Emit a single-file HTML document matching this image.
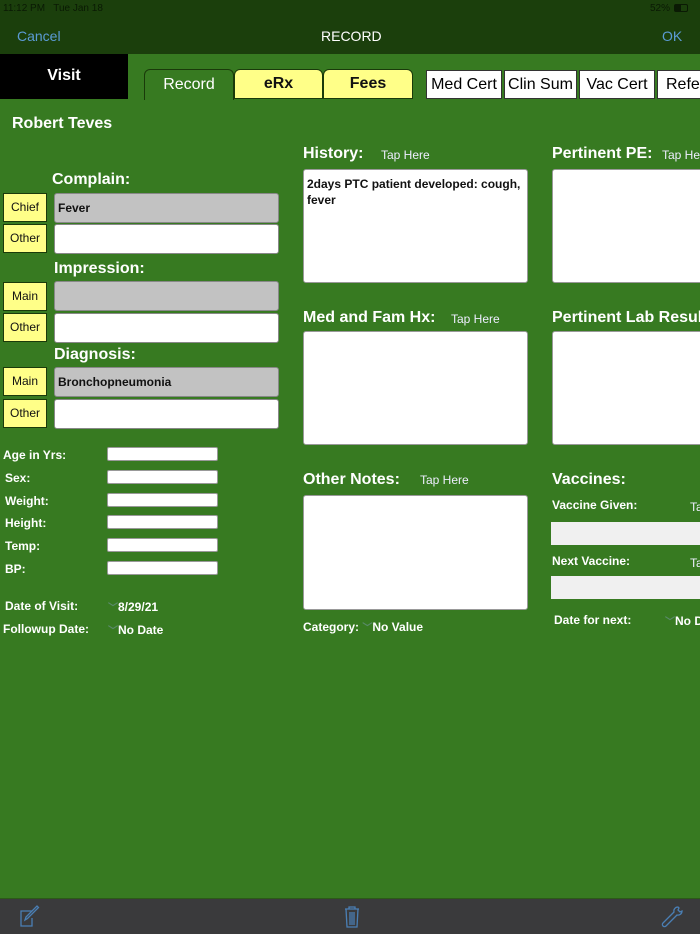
<!DOCTYPE html>
<html><head><meta charset="utf-8"><style>
*{margin:0;padding:0;box-sizing:border-box}
body{width:700px;height:934px;overflow:hidden;background:#377a21;font-family:"Liberation Sans",sans-serif;position:relative;color:#fff}
.a{position:absolute;white-space:nowrap}
.lbl{font-size:16px;font-weight:bold}
.sm{font-size:12px;font-weight:bold}
.tap{font-size:12px;color:#eef}
.yb{position:absolute;left:3px;width:44px;height:29px;background:#ffff88;border:1px solid #1a3a0a;color:#111;font-size:12px;text-align:center;line-height:27px}
.fld{position:absolute;left:54px;width:225px;height:30px;border:1px solid #888;border-radius:3px;background:#fff;color:#111;font-size:12px;font-weight:bold;padding:7px 3px}
.gr{background:#c2c2c2}
.vf{position:absolute;left:107px;width:111px;height:14px;background:#fff;border:1px solid #999;border-radius:2px}
.box{position:absolute;background:#fff;border:1px solid #999;border-radius:3px;color:#111;font-size:12px;font-weight:bold;padding:6px 3px;line-height:16px}
.tb{position:absolute;top:70px;height:29px;background:#fff;border:1px solid #333;color:#000;font-size:16px;text-align:center;line-height:27px}
.chev{color:#5a8a6a;font-size:10px}
</style></head><body>
<div class="a" style="left:0;top:0;width:700px;height:54px;background:#1b3f0c"></div>
<div class="a" style="left:3px;top:3px;font-size:10px;color:#0a1a04">11:12 PM&nbsp;&nbsp; Tue Jan 18</div>
<div class="a" style="left:650px;top:3px;font-size:10px;color:#0a1a04">52%</div>
<div class="a" style="left:674px;top:4px;width:14px;height:8px;border:1px solid #0a1a04;border-radius:2px"><div style="width:6px;height:6px;background:#0a1a04"></div></div>
<div class="a" style="left:17px;top:28px;font-size:14px;color:#5b9bd5">Cancel</div>
<div class="a" style="left:321px;top:28px;font-size:14px;color:#fff">RECORD</div>
<div class="a" style="left:662px;top:28px;font-size:14px;color:#5b9bd5">OK</div>

<div class="a" style="left:0;top:54px;width:128px;height:45px;background:#000;text-align:center;font-size:16px;font-weight:bold;line-height:44px">Visit</div>
<div class="a" style="left:144px;top:69px;width:90px;height:31px;background:#377a21;border:1px solid #1a3a0a;border-bottom:none;border-radius:6px 6px 0 0;text-align:center;font-size:16px;line-height:30px">Record</div>
<div class="a" style="left:234px;top:69px;width:89px;height:30px;background:#ffff88;border:1px solid #1a3a0a;border-radius:6px 6px 0 0;text-align:center;font-size:16px;font-weight:bold;color:#111;line-height:28px">eRx</div>
<div class="a" style="left:323px;top:69px;width:90px;height:30px;background:#ffff88;border:1px solid #1a3a0a;border-radius:6px 6px 0 0;text-align:center;font-size:16px;font-weight:bold;color:#111;line-height:28px">Fees</div>
<div class="tb" style="left:426px;width:76px">Med Cert</div>
<div class="tb" style="left:504px;width:73px">Clin Sum</div>
<div class="tb" style="left:579px;width:76px">Vac Cert</div>
<div class="tb" style="left:657px;width:50px;text-align:left;padding-left:8px">Refer</div>

<div class="a lbl" style="left:12px;top:115px">Robert Teves</div>

<div class="a lbl" style="left:52px;top:171px">Complain:</div>
<div class="yb" style="top:193px">Chief</div><div class="fld gr" style="top:193px">Fever</div>
<div class="yb" style="top:224px">Other</div><div class="fld" style="top:224px"></div>
<div class="a lbl" style="left:54px;top:260px">Impression:</div>
<div class="yb" style="top:282px">Main</div><div class="fld gr" style="top:281px"></div>
<div class="yb" style="top:313px">Other</div><div class="fld" style="top:313px"></div>
<div class="a lbl" style="left:54px;top:346px">Diagnosis:</div>
<div class="yb" style="top:367px">Main</div><div class="fld gr" style="top:367px">Bronchopneumonia</div>
<div class="yb" style="top:399px">Other</div><div class="fld" style="top:399px"></div>

<div class="a sm" style="left:3px;top:448px">Age in Yrs:</div><div class="vf" style="top:447px"></div>
<div class="a sm" style="left:5px;top:471px">Sex:</div><div class="vf" style="top:470px"></div>
<div class="a sm" style="left:5px;top:494px">Weight:</div><div class="vf" style="top:493px"></div>
<div class="a sm" style="left:5px;top:516px">Height:</div><div class="vf" style="top:515px"></div>
<div class="a sm" style="left:5px;top:539px">Temp:</div><div class="vf" style="top:538px"></div>
<div class="a sm" style="left:5px;top:562px">BP:</div><div class="vf" style="top:561px"></div>
<div class="a sm" style="left:5px;top:599px">Date of Visit:</div><div class="a sm" style="left:108px;top:599px"><span class="chev">﹀</span>8/29/21</div>
<div class="a sm" style="left:3px;top:622px">Followup Date:</div><div class="a sm" style="left:108px;top:622px"><span class="chev">﹀</span>No Date</div>

<div class="a lbl" style="left:303px;top:145px">History:</div><div class="a tap" style="left:381px;top:148px">Tap Here</div>
<div class="box" style="left:303px;top:169px;width:225px;height:114px">2days PTC patient developed: cough, fever</div>
<div class="a lbl" style="left:303px;top:309px">Med and Fam Hx:</div><div class="a tap" style="left:451px;top:312px">Tap Here</div>
<div class="box" style="left:303px;top:331px;width:225px;height:114px"></div>
<div class="a lbl" style="left:303px;top:471px">Other Notes:</div><div class="a tap" style="left:420px;top:473px">Tap Here</div>
<div class="box" style="left:303px;top:495px;width:225px;height:115px"></div>
<div class="a sm" style="left:303px;top:619px">Category: <span class="chev">﹀</span>No Value</div>

<div class="a lbl" style="left:552px;top:145px">Pertinent PE:</div><div class="a tap" style="left:662px;top:148px">Tap Here</div>
<div class="box" style="left:552px;top:169px;width:160px;height:114px"></div>
<div class="a lbl" style="left:552px;top:309px">Pertinent Lab Result</div>
<div class="box" style="left:552px;top:331px;width:160px;height:114px"></div>
<div class="a lbl" style="left:552px;top:471px">Vaccines:</div>
<div class="a sm" style="left:552px;top:498px">Vaccine Given:</div><div class="a tap" style="left:690px;top:500px">Tap</div>
<div class="a" style="left:551px;top:522px;width:160px;height:23px;background:#f0f0f0"></div>
<div class="a sm" style="left:552px;top:554px">Next Vaccine:</div><div class="a tap" style="left:690px;top:556px">Tap</div>
<div class="a" style="left:551px;top:576px;width:160px;height:23px;background:#f0f0f0"></div>
<div class="a sm" style="left:554px;top:613px">Date for next:</div><div class="a sm" style="left:665px;top:613px"><span class="chev">﹀</span>No Date</div>

<div class="a" style="left:0;top:898px;width:700px;height:36px;background:#3a3a3c;border-top:1px solid #2c5a18"></div>
<svg class="a" style="left:18px;top:905px" width="24" height="24" viewBox="0 0 24 24" fill="none" stroke="#4a7fb5" stroke-width="1.3"><path d="M14 6H3v15h11V13"/><path d="M7 15l1-3 11-11 1.5 1.5-11 11z"/></svg>
<svg class="a" style="left:343px;top:905px" width="18" height="24" viewBox="0 0 18 24" fill="none" stroke="#4a7fb5" stroke-width="1.3"><path d="M2 4h14M6 4V2h6v2M3 4l1 18h10l1-18M7 7v13M9 7v13M11 7v13"/></svg>
<svg class="a" style="left:660px;top:905px" width="24" height="24" viewBox="0 0 24 24" fill="none" stroke="#4a7fb5" stroke-width="1.3"><path d="M18 2a4 4 0 0 0-4 5L3 18a2 2 0 0 0 3 3l11-11a4 4 0 0 0 5-4l-2 1-2-2 1-2z"/></svg>
</body></html>
